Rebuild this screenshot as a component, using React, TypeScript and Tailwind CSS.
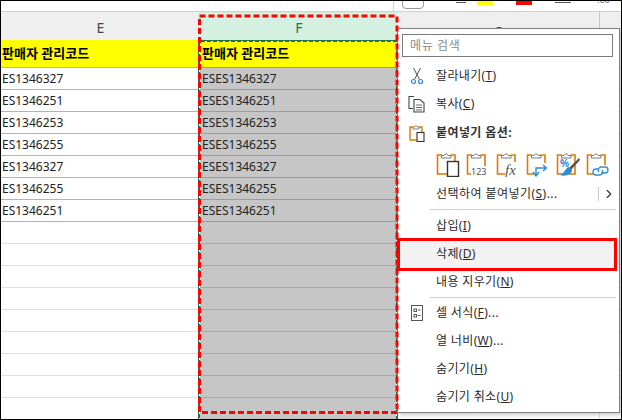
import { ChevronRight } from 'lucide-react';
import type { ReactNode } from 'react';

const font = { fontFamily: '"Noto Sans", "Noto Sans CJK KR", sans-serif' };

const eCodes = ['ES1346327', 'ES1346251', 'ES1346253', 'ES1346255', 'ES1346327', 'ES1346255', 'ES1346251'];

function Clip({ children }: { children?: ReactNode }) {
  return (
    <svg width="24" height="26" viewBox="0 0 24 26" fill="none">
      <path d="M6 4H1.5V23H19V4H14.5" stroke="#e07b00" strokeWidth="1.6" />
      <path d="M5.5 7V4.5H8A2.2 2.2 0 0 1 12.2 4.5H15V7Z" fill="#fff" stroke="#7a7a7a" strokeWidth="1" />
      {children}
    </svg>
  );
}

const pasteIcons = [
  <Clip key="all"><rect x="11.5" y="10.5" width="11" height="15" fill="#fff" stroke="#333" strokeWidth="1.4" /></Clip>,
  <Clip key="values"><rect x="5" y="15" width="19" height="11" fill="#fff" /><text x="5" y="24" fontSize="9" fill="#555" style={font}>123</text></Clip>,
  <Clip key="formula"><rect x="9" y="11" width="15" height="15" fill="#fff" /><text x="9" y="24" fontSize="15" fill="#555" fontStyle="italic" fontFamily="Liberation Serif, serif">fx</text></Clip>,
  <Clip key="transpose">
    <rect x="8" y="12" width="16" height="14" fill="#fff" />
    <path d="M10 24V17H20M17 14L20.5 17L17 20M7 21L10 25L13 21" stroke="#2b8fd8" strokeWidth="1.4" />
  </Clip>,
  <Clip key="format">
    <text x="4" y="16" fontSize="10" fill="#2b8fd8" fontWeight="700" style={font}>%</text>
    <path d="M23 7L13 17L15 19L24 9Z" fill="#555" />
    <path d="M13 16C9 17 9 22 4 24C10 26 16 23 16 19Z" fill="#2b8fd8" />
  </Clip>,
  <Clip key="link">
    <rect x="7" y="14" width="17" height="12" fill="#fff" />
    <path d="M13 18H10A3 3 0 0 0 10 24H14A3 3 0 0 0 16 19M15 22H19A3 3 0 0 0 19 16H15A3 3 0 0 0 13 21" stroke="#2b8fd8" strokeWidth="1.3" />
  </Clip>,
];

function MenuItem({ icon, highlight, children }: { icon?: ReactNode; highlight?: boolean; children: ReactNode }) {
  return (
    <div className={`relative flex h-7 items-center ${highlight ? 'bg-[#f2f2f2]' : ''}`}>
      <div className="flex w-[38px] justify-center">{icon}</div>
      <span className="text-[12px] text-[#2a2a2a] tracking-[0.35px]">{children}</span>
      {highlight && <div className="absolute -top-[2px] -bottom-[3px] -left-px right-[2px] border-[3px] border-[#ff0000]" />}
    </div>
  );
}

function Sep() {
  return <div className="ml-[32px] mr-[3px] h-px bg-[#d0d0d0]" />;
}

function Row({ e, f, yellow, strong }: { e?: string; f?: string; yellow?: boolean; strong?: boolean }) {
  const height = yellow ? 'h-7' : 'h-[22px]';
  const size = yellow ? 'text-[13px]' : 'pt-px text-[12px]';
  return (
    <div className={`grid grid-cols-[198px_199px_203px_1fr] ${height}`}>
      <div className={`flex items-center overflow-hidden whitespace-nowrap border-b pl-[2px] ${size} ${strong ? 'border-[#b4b4b4]' : 'border-[#e0e0e0]'} ${yellow ? 'bg-[#ffff00] font-bold text-black' : 'bg-white text-[#222]'}`}>{e}</div>
      <div className={`flex items-center overflow-hidden whitespace-nowrap border-b pl-[4px] ${size} ${strong ? 'border-[#9c9c9c]' : 'border-[#a8a8a8]'} ${yellow ? 'bg-[#ffff00] font-bold text-black' : 'bg-[#c6c6c6] text-[#222]'}`}>{f}</div>
      <div className="border-b border-r border-[#e0e0e0] bg-white" />
      <div className="border-b border-[#e0e0e0] bg-white" />
    </div>
  );
}

export default function App() {
  return (
    <div className="relative h-[420px] w-[622px] overflow-hidden bg-white" style={font}>
      {/* ribbon leftovers above the sheet */}
      <div className="flex h-[11px] items-start overflow-hidden pt-px">
        <div className="ml-[393px] h-[10px] w-px bg-[#d0d0d0]" />
        <div className="ml-2 -mt-1 h-[12px] w-[22px] rounded-b border border-[#9a9a9a]" />
        <div className="ml-8 mt-px h-px w-[10px] bg-[#555]" />
        <div className="ml-[11px] h-1 w-4 bg-[#ffff00]" />
        <div className="ml-[23px] h-1 w-4 bg-[#ff0000]" />
        <div className="ml-[23px] mt-px h-px w-4 bg-[#555]" />
        <div className="ml-[26px] -mt-2 text-[9px] leading-[14px] text-[#666]">.00</div>
      </div>

      <div className="grid h-[29px] grid-cols-[198px_199px_203px_1fr] border-t border-[#d0d0d0] text-[14px]">
        <div className="flex items-center justify-center border-b border-[#b0b0b0] bg-[#efefef] pl-[3px] text-[#444]">E</div>
        <div className="flex items-center justify-center bg-[#d3f0e0] pl-[3px] text-[#217346]">F</div>
        <div className="flex justify-center border-b border-r border-[#c8c8c8] bg-[#efefef] pt-[9px] text-[#444]">G</div>
        <div className="border-b border-[#c8c8c8] bg-[#efefef]" />
      </div>

      <Row e="판매자 관리코드" f="판매자 관리코드" yellow strong />
      {eCodes.map((c, i) => <Row key={i} e={c} f={'ES' + c} strong />)}
      {Array.from({ length: 10 }).map((_, i) => <Row key={i} />)}

      {/* selected column outline */}
      <svg className="absolute left-0 top-0" width="622" height="420" fill="none">
        <path d="M199 420V41H397V420" stroke="#217346" strokeWidth="2" />
        <path d="M199.5 420V41.5H396.5V420" stroke="#fff" strokeWidth="1" strokeDasharray="2 4" />
      </svg>

      {/* context menu */}
      <div className="absolute left-[397px] top-[28px] h-[385px] w-[223px] border border-[#808080] bg-white pt-[5px] shadow-[2px_2px_4px_rgba(0,0,0,0.2)]">
        <div className="mb-[5px] ml-[4px] flex h-[23px] w-[211px] items-center border border-[#7a7a7a] pl-[7px] text-[12px] tracking-[0.6px] text-[#8a8a8a]">메뉴 검색</div>
        <MenuItem icon={
          <svg width="16" height="18" viewBox="0 0 16 18" fill="none">
            <path d="M4.5 1L10.5 12.5M11.5 1L5.5 12.5" stroke="#555" strokeWidth="1" />
            <circle cx="4.5" cy="14.5" r="2" stroke="#2b8fd8" strokeWidth="1.2" />
            <circle cx="11.5" cy="14.5" r="2" stroke="#2b8fd8" strokeWidth="1.2" />
          </svg>
        }>잘라내기(<u>T</u>)</MenuItem>
        <MenuItem icon={
          <svg width="18" height="18" viewBox="0 0 18 18" fill="none" stroke="#444" strokeWidth="1.1">
            <path d="M6 1.5H1V13.5H5" />
            <path d="M6 4.5H12L16 8V17H6Z" fill="#fff" />
            <path d="M8 10H14M8 12.5H14M8 15H14" strokeWidth="0.8" />
          </svg>
        }>복사(<u>C</u>)</MenuItem>
        <div className="mt-px flex h-7 items-center">
          <div className="flex w-[38px] justify-center">
            <svg width="16" height="18" viewBox="0 0 16 18" fill="none">
              <path d="M4 3H1V16H13V3H10" stroke="#e07b00" strokeWidth="1.4" />
              <path d="M4 5V3H5.5A1.6 1.6 0 0 1 8.5 3H10V5Z" fill="#fff" stroke="#777" strokeWidth="0.9" />
              <rect x="8" y="8.5" width="7" height="9" fill="#fff" stroke="#333" strokeWidth="1.1" />
            </svg>
          </div>
          <span className="text-[12px] font-bold tracking-[0.4px] text-[#333]">붙여넣기 옵션:</span>
        </div>
        <div className="flex h-[33px] items-center gap-[6px] pl-[38px]">{pasteIcons}</div>
        <div className="flex h-7 items-center pl-[38px] text-[12px] tracking-[0.45px] text-[#2a2a2a]">
          <span>선택하여 붙여넣기(<u>S</u>)...</span>
          <div className="ml-auto flex items-center">
            <div className="h-[14px] w-px bg-[#c8c8c8]" />
            <ChevronRight className="mx-[3px] h-[14px] w-[14px] text-[#333]" />
          </div>
        </div>
        <div className="pt-px pb-[2px]"><Sep /></div>
        <MenuItem>삽입(<u>I</u>)</MenuItem>
        <MenuItem highlight>삭제(<u>D</u>)</MenuItem>
        <MenuItem>내용 지우기(<u>N</u>)</MenuItem>
        <div className="pt-px pb-px"><Sep /></div>
        <MenuItem icon={
          <svg width="14" height="18" viewBox="0 0 14 18" fill="none" stroke="#555" strokeWidth="1">
            <rect x="1.5" y="1.5" width="11" height="15" />
            <rect x="4" y="5" width="2.5" height="2.5" />
            <rect x="4" y="10.5" width="2.5" height="2.5" />
            <path d="M8 6H10.5M8 11.5H10.5" />
          </svg>
        }>셀 서식(<u>F</u>)...</MenuItem>
        <MenuItem>열 너비(<u>W</u>)...</MenuItem>
        <MenuItem>숨기기(<u>H</u>)</MenuItem>
        <MenuItem>숨기기 취소(<u>U</u>)</MenuItem>
      </div>

      {/* red annotation around the column */}
      <svg className="pointer-events-none absolute left-0 top-0" width="622" height="420" fill="none">
        <rect x="199.5" y="16" width="197.5" height="396.5" stroke="#ff0000" strokeWidth="3" strokeDasharray="6 3" />
      </svg>

      {/* screenshot frame */}
      <div className="pointer-events-none absolute inset-0 border border-black" />
    </div>
  );
}
